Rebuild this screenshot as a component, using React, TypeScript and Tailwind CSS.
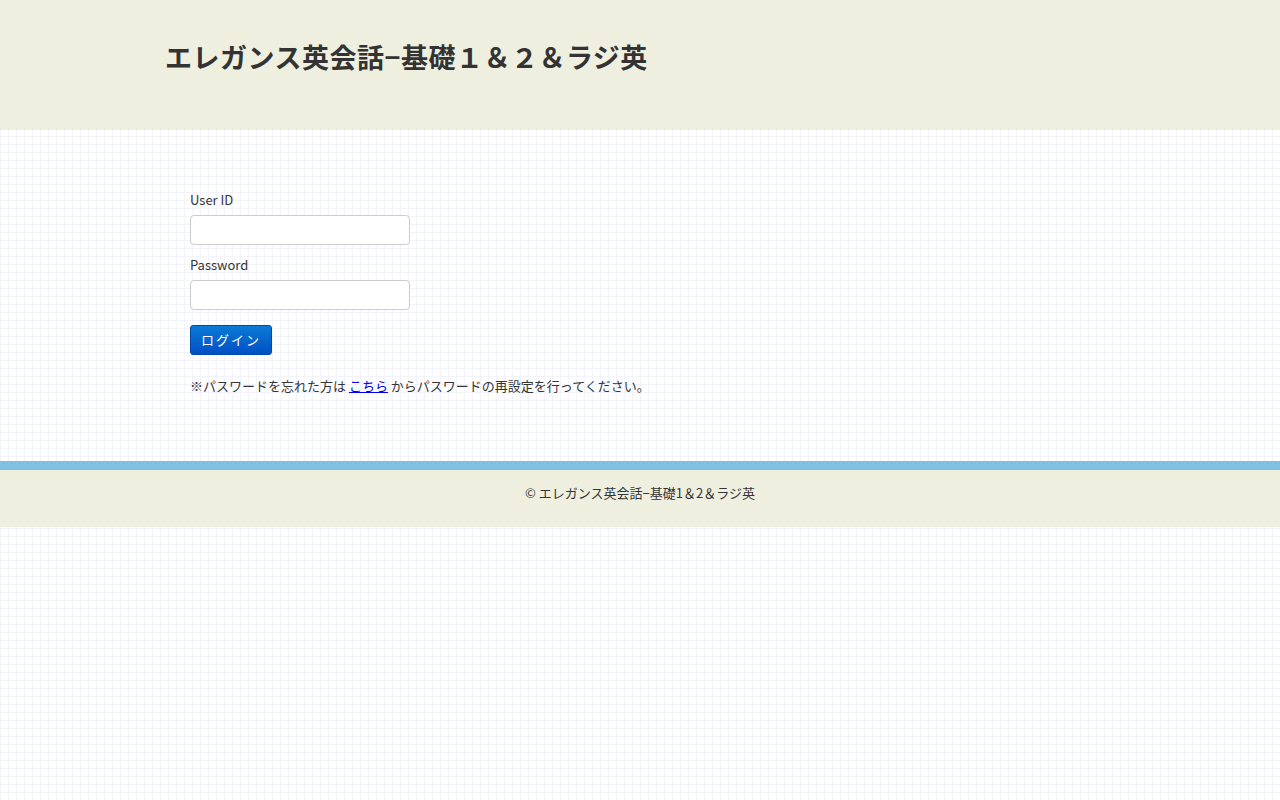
import React from 'react';

const jp = { fontFamily: '"Noto Sans CJK JP", "Noto Sans", sans-serif' };

export default function App() {
  return (
    <div
      className="min-h-[800px] w-full text-[#333] bg-white bg-[linear-gradient(to_right,#f3f3fb_1px,transparent_1px),linear-gradient(to_bottom,#f3f3fb_1px,transparent_1px)] bg-[size:8px_8px]"
      style={jp}
    >
      {/* Header */}
      <header className="h-[130px] bg-[#efefe0]">
        <div className="mx-auto w-[950px] pt-[35px]">
          <h1 className="text-[27px] font-bold leading-[44px] tracking-[0.5px] text-[#333]">
            エレガンス英会話−基礎１＆２＆ラジ英
          </h1>
        </div>
      </header>

      {/* Login form */}
      <main className="mx-auto w-[950px] pl-[25px] pt-[61px] pb-[66px]">
        <form className="flex flex-col" onSubmit={(e) => e.preventDefault()}>
          <label className="text-[13px] leading-[18px] mb-[6px]">User ID</label>
          <input
            type="text"
            className="w-[220px] h-[30px] rounded-[4px] border border-[#ccc] bg-white px-2 text-[13px] outline-none"
          />
          <label className="text-[13px] leading-[18px] mt-[11px] mb-[6px]">Password</label>
          <input
            type="password"
            className="w-[220px] h-[30px] rounded-[4px] border border-[#ccc] bg-white px-2 text-[13px] outline-none"
          />
          <button
            type="submit"
            className="mt-[15px] w-[82px] h-[30px] rounded-[3px] border border-[#0048aa] bg-[linear-gradient(to_bottom,#0a7ad6,#0050c4)] text-white text-[13px] tracking-[2px]"
          >
            ログイン
          </button>
        </form>
        <p className="mt-[22px] text-[13px] leading-[18px]">
          ※パスワードを忘れた方は <a href="#" className="text-[#0000ee] underline">こちら</a> からパスワードの再設定を行ってください。
        </p>
      </main>

      {/* Footer */}
      <div className="h-[9px] bg-[#7fc1e0]" />
      <footer className="h-[57px] bg-[#efefe0] pt-[14px] text-center text-[13px] leading-[18px]">
        © エレガンス英会話−基礎1＆2＆ラジ英
      </footer>
    </div>
  );
}
